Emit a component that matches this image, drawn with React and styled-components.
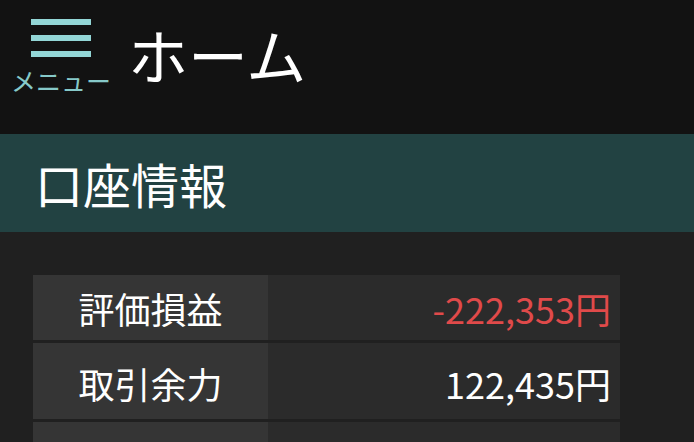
import React from "react";
import styled, { createGlobalStyle } from "styled-components";

const Global = createGlobalStyle`
  html, body {
    margin: 0;
    padding: 0;
    background: #202020;
    font-family: "Noto Sans CJK JP", "Noto Sans", sans-serif;
    overflow: hidden;
  }
  * { box-sizing: border-box; }
`;

const Page = styled.div`
  width: 694px;
  min-height: 442px;
  background: #202020;
`;

const Header = styled.header`
  height: 134px;
  background: #121212;
  display: flex;
  align-items: flex-start;
`;

const MenuButton = styled.button`
  all: unset;
  width: 100px;
  margin-left: 11px;
  padding-top: 19px;
  display: flex;
  flex-direction: column;
  align-items: center;
  cursor: pointer;
`;

const Bars = styled.div`
  width: 60px;
  display: flex;
  flex-direction: column;
  gap: 10px;
`;

const Bar = styled.span`
  display: block;
  height: 6px;
  background: #93d6d6;
`;

const MenuLabel = styled.span`
  margin-top: 9px;
  font-size: 25px;
  line-height: 28px;
  color: #86c9c9;
`;

const PageTitle = styled.h1`
  margin: 14px 0 0 17px;
  font-size: 60px;
  font-weight: 400;
  line-height: 80px;
  color: #ffffff;
`;

const Band = styled.section`
  height: 98px;
  background: #224242;
  display: flex;
  align-items: center;
  padding-left: 35px;
`;

const BandTitle = styled.h2`
  margin: 0;
  font-size: 48px;
  font-weight: 400;
  line-height: 60px;
  color: #ffffff;
`;

const Body = styled.main`
  padding: 43px 0 0 33px;
`;

const Table = styled.div`
  width: 587px;
  display: flex;
  flex-direction: column;
  gap: 3px;
`;

const Row = styled.div`
  display: grid;
  grid-template-columns: 235px 1fr;
  height: ${(p) => p.$h}px;
`;

const Label = styled.div`
  background: #353535;
  color: #ffffff;
  font-size: 36px;
  display: flex;
  align-items: center;
  justify-content: center;
  padding-top: ${(p) => p.$pt || 0}px;
`;

const Value = styled.div`
  background: #2b2b2b;
  color: ${(p) => (p.$neg ? "#e04a4a" : "#ffffff")};
  font-size: 36px;
  display: flex;
  align-items: center;
  justify-content: flex-end;
  padding-right: 9px;
  padding-top: ${(p) => p.$pt || 0}px;
`;

const rows = [
  { label: "評価損益", value: "-222,353円", neg: true, h: 65, pt: 0 },
  { label: "取引余力", value: "122,435円", neg: false, h: 76, pt: 4 },
  { label: "", value: "", neg: false, h: 40, pt: 0 },
];

export default function App() {
  return (
    <Page>
      <Global />
      <Header>
        <MenuButton aria-label="メニュー">
          <Bars>
            <Bar />
            <Bar />
            <Bar />
          </Bars>
          <MenuLabel>メニュー</MenuLabel>
        </MenuButton>
        <PageTitle>ホーム</PageTitle>
      </Header>
      <Band>
        <BandTitle>口座情報</BandTitle>
      </Band>
      <Body>
        <Table>
          {rows.map((r, i) => (
            <Row key={i} $h={r.h}>
              <Label $pt={r.pt}>{r.label}</Label>
              <Value $neg={r.neg} $pt={r.pt}>{r.value}</Value>
            </Row>
          ))}
        </Table>
      </Body>
    </Page>
  );
}
